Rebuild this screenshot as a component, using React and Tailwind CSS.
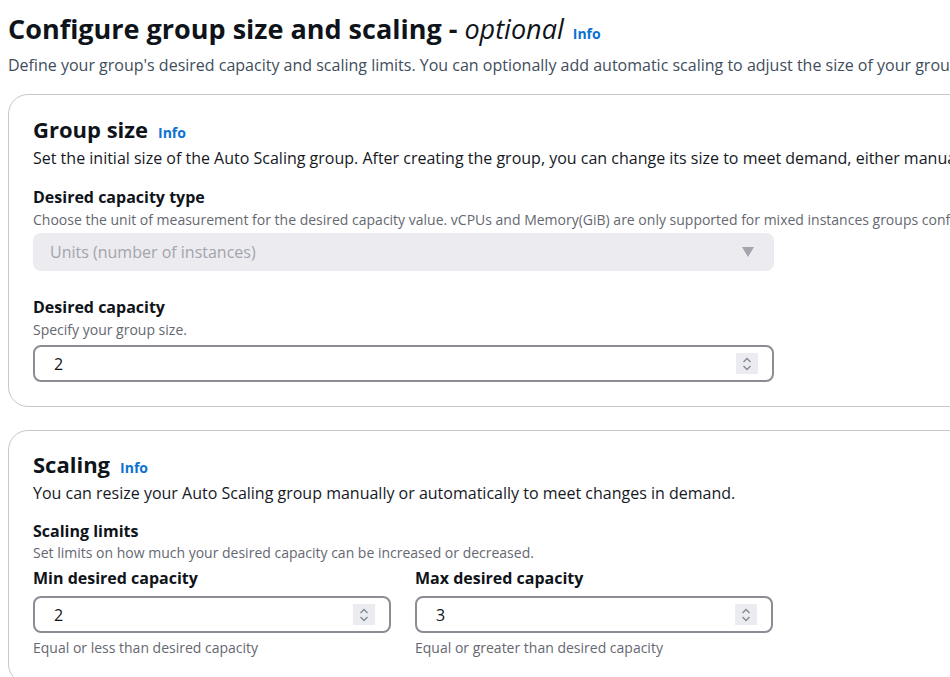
import React from 'react';

const font = { fontFamily: '"Open Sans", "Noto Sans", sans-serif' };

function Info() {
  return <span className="text-[14px] font-bold text-[#0972d3]">Info</span>;
}

function Spinner() {
  return (
    <span className="flex h-[21px] w-[22px] items-center justify-center bg-[#ececf0]">
      <svg width="10" height="16" viewBox="0 0 10 16" fill="none" stroke="#7d8998" strokeWidth="1.3">
        <path d="M1.5 6 L5 2.5 L8.5 6" />
        <path d="M1.5 10 L5 13.5 L8.5 10" />
      </svg>
    </span>
  );
}

function NumberInput({ value, width = 'w-[741px]' }) {
  return (
    <div className={`flex h-[37px] ${width} items-center justify-between rounded-lg border-2 border-[#8c8c94] bg-white pl-[19px] pr-[14px]`}>
      <span className="text-[16px] text-[#0f141a]">{value}</span>
      <Spinner />
    </div>
  );
}

function Label({ children }) {
  return <div className="text-[16px] font-bold leading-[22px] text-[#0f141a]">{children}</div>;
}

function Hint({ children }) {
  return <div className="text-[14px] leading-[20px] text-[#656871]">{children}</div>;
}

export default function App() {
  return (
    <div className="h-[677px] w-[950px] overflow-hidden bg-white" style={font}>
      <div className="w-[1400px] px-2 pt-[10px]">
        <h1 className="flex items-baseline gap-[9px] text-[27px] font-bold leading-[38px] text-[#0f141a]">
          <span>
            Configure group size and scaling - <span className="font-normal italic">optional</span>
          </span>
          <Info />
        </h1>
        <p className="mt-[1px] text-[16px] leading-[22px] text-[#414d5c]">
          Define your group's desired capacity and scaling limits. You can optionally add automatic scaling to adjust the size of your group.
        </p>

        <section className="mt-[18px] rounded-[20px] border border-[#c6c6cd] px-6 pt-[19px] pb-[24px]">
          <div className="flex items-baseline gap-[10px]">
            <h2 className="text-[22px] font-bold leading-[30px] text-[#0f141a]">Group size</h2>
            <Info />
          </div>
          <p className="mt-[3px] text-[16px] leading-[22px] text-[#16191f]">
            Set the initial size of the Auto Scaling group. After creating the group, you can change its size to meet demand, either manually or by using automatic scaling.
          </p>

          <div className="mt-[17px]">
            <Label>Desired capacity type</Label>
            <div className="mt-[2px]">
              <Hint>Choose the unit of measurement for the desired capacity value. vCPUs and Memory(GiB) are only supported for mixed instances groups configured with a set of instance attributes.</Hint>
            </div>
            <div className="mt-[3px] flex h-[38px] w-[741px] items-center justify-between rounded-lg bg-[#ebebf0] pl-[17px] pr-[20px]">
              <span className="text-[16px] text-[#a4a4ad]">Units (number of instances)</span>
              <svg width="12" height="10" viewBox="0 0 12 10">
                <path d="M0 0 H12 L6 10 Z" fill="#a4a4ad" />
              </svg>
            </div>
          </div>

          <div className="mt-[25px]">
            <Label>Desired capacity</Label>
            <div className="mt-[2px]">
              <Hint>Specify your group size.</Hint>
            </div>
            <div className="mt-[5px]">
              <NumberInput value="2" />
            </div>
          </div>
        </section>

        <section className="mt-[23px] rounded-[20px] border border-[#c6c6cd] px-6 pt-[18px] pb-[25px]">
          <div className="flex items-baseline gap-[10px]">
            <h2 className="text-[22px] font-bold leading-[30px] text-[#0f141a]">Scaling</h2>
            <Info />
          </div>
          <p className="mt-[3px] text-[16px] leading-[22px] text-[#16191f]">
            You can resize your Auto Scaling group manually or automatically to meet changes in demand.
          </p>

          <div className="mt-[16px]">
            <Label>Scaling limits</Label>
            <div className="mt-[1px]">
              <Hint>Set limits on how much your desired capacity can be increased or decreased.</Hint>
            </div>
            <div className="mt-[4px] flex gap-[24px]">
              <div>
                <Label>Min desired capacity</Label>
                <div className="mt-[7px]">
                  <NumberInput value="2" width="w-[358px]" />
                </div>
                <div className="mt-[5px]">
                  <Hint>Equal or less than desired capacity</Hint>
                </div>
              </div>
              <div>
                <Label>Max desired capacity</Label>
                <div className="mt-[7px]">
                  <NumberInput value="3" width="w-[358px]" />
                </div>
                <div className="mt-[5px]">
                  <Hint>Equal or greater than desired capacity</Hint>
                </div>
              </div>
            </div>
          </div>
        </section>
      </div>
    </div>
  );
}
